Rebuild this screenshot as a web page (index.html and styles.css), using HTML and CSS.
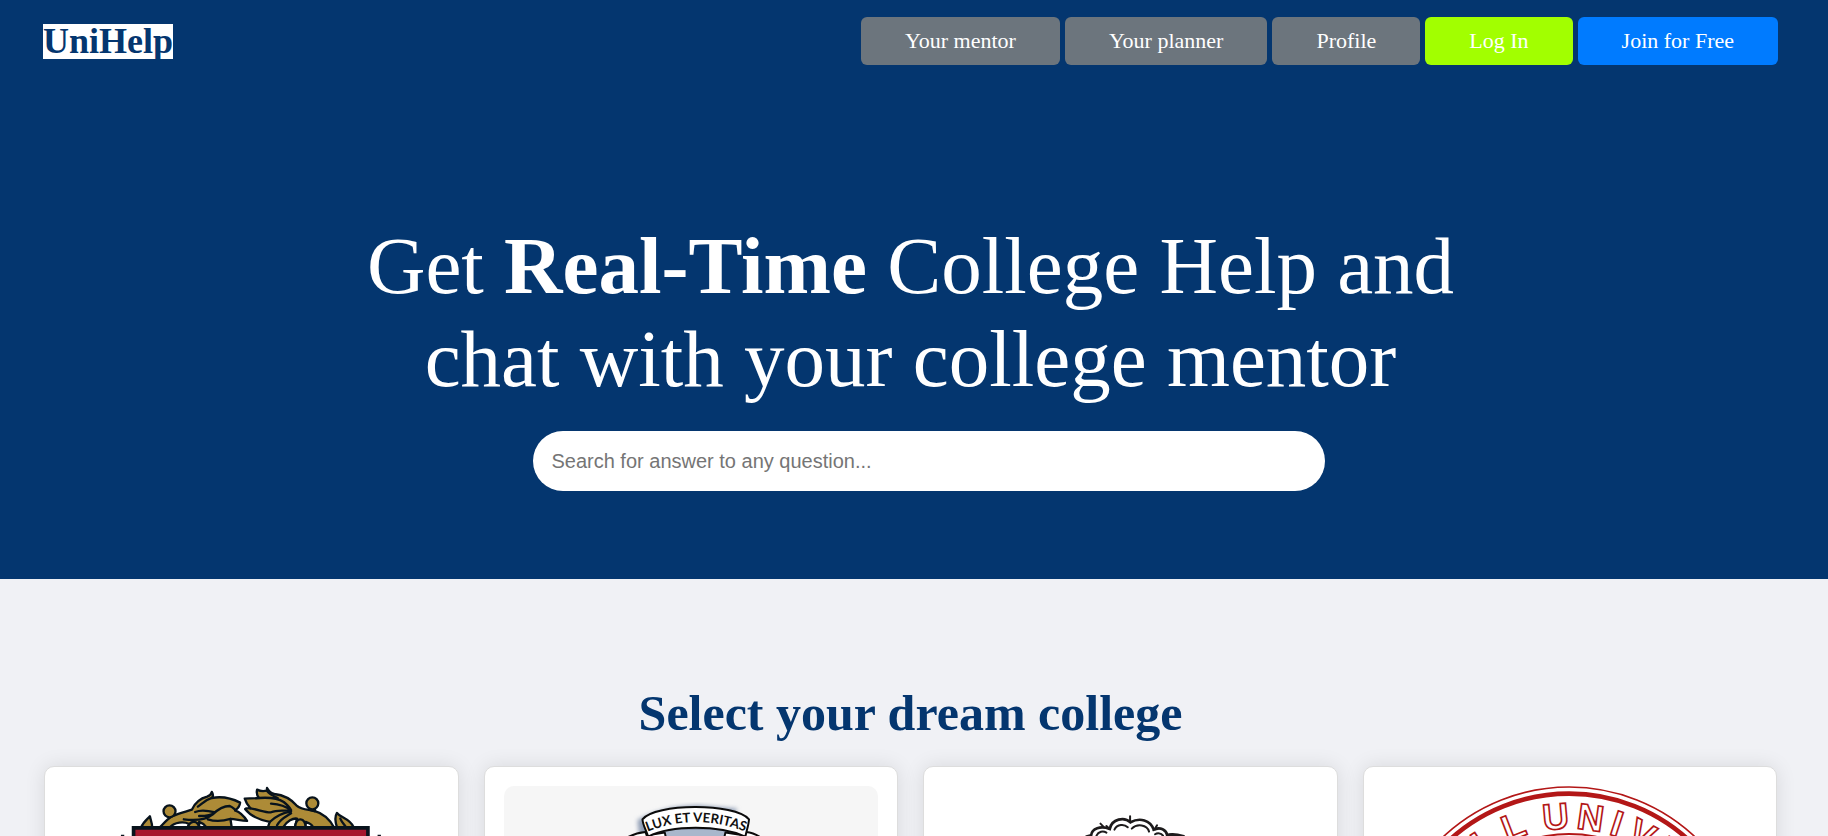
FILE: index.html
```
<!DOCTYPE html>
<html lang="en">
<head>
    <meta charset="UTF-8">
    <meta name="viewport" content="width=device-width, initial-scale=1.0">
    <title>UniHelp</title>
    <link rel="stylesheet" href="styles.css">
</head>
<body>
    <div class="hero">
        <header class="navbar">
            <a class="logo" href="#">UniHelp</a>
            <nav class="nav-buttons">
                <button type="button" class="btn">Your mentor</button>
                <button type="button" class="btn">Your planner</button>
                <button type="button" class="btn">Profile</button>
                <button type="button" class="btn btn-login">Log In</button>
                <button type="button" class="btn btn-join">Join for Free</button>
            </nav>
        </header>

        <h1>Get <b>Real-Time</b> College Help and<br>chat with your college mentor</h1>

        <form class="search">
            <input type="text" name="question" aria-label="Search" placeholder="Search for answer to any question...">
        </form>
    </div>

    <section class="colleges">
        <h2>Select your dream college</h2>
        <div class="cards">
            <!-- laurel and shield -->
            <a class="card" href="#" aria-label="Harvard">
                <svg viewBox="102 108 1125 1125">
                    <g fill="#ad8b37" stroke="#08131c" stroke-width="7" stroke-linejoin="round" stroke-linecap="round">
                        <path d="M334 232 C340 216 352 208 360 199 C362 210 367 220 367 232 Z"/>
                        <path d="M388 234 C400 222 412 208 426 199 C448 190 472 184 486 179 C496 158 512 145 532 140 C542 136 545 131 546 126 C551 134 550 140 546 144 C578 138 608 146 631 158 C630 168 624 176 616 181 C632 187 644 200 652 213 C632 212 616 207 602 207 L606 234 Z"/>
                        <path fill="none" d="M462 208 C496 212 528 210 548 194 C562 180 580 168 600 168 C612 174 618 180 616 181 M496 186 C514 178 536 182 556 187 C548 194 528 198 508 198 M546 144 C526 150 518 160 504 170 M602 207 C578 214 552 214 534 208"/>
                        <path fill="#fff" d="M420 232 C434 216 462 214 478 222 L474 232 Z"/>
                        <path d="M474 234 C478 212 504 208 508 234 Z"/>
                        <path fill="#fff" d="M508 232 L508 216 C520 220 526 226 530 232 Z"/>
                        <circle cx="419" cy="184" r="18"/>
                        <path d="M714 234 L720 216 C690 210 662 198 646 177 C650 173 656 174 662 175 C654 166 648 156 645 146 C660 146 674 145 688 144 C680 136 680 128 682 119 C692 124 702 124 711 122 L712 114 C718 124 724 130 734 132 C768 136 788 152 800 166 C816 180 832 178 852 182 C880 190 902 210 914 234 Z"/>
                        <path fill="none" d="M662 175 C690 180 708 188 724 187 C744 178 766 184 784 182 C766 166 744 162 724 161 M688 144 C716 142 744 144 762 156 C772 164 780 172 784 180 M711 122 C718 132 730 138 744 144 M784 184 C762 188 742 194 720 216 M742 226 C750 208 768 200 784 190"/>
                        <path fill="#fff" d="M760 232 C772 212 790 204 802 206 L796 232 Z"/>
                        <path d="M796 234 C796 198 830 202 828 234 Z"/>
                        <path fill="#fff" d="M828 216 C840 220 848 226 850 232 L828 232 Z"/>
                        <path d="M840 180 L840 172 L856 172 L856 184 Z"/>
                        <circle cx="848" cy="160" r="18"/>
                        <path d="M922 232 C916 214 915 200 922 189 C930 202 962 206 972 232 Z M932 206 C936 216 942 222 948 230"/>
                    </g>
                    <path d="M273 257 h10 M1044 257 h10" stroke="#08131c" stroke-width="5"/>
                    <path d="M311 234 H1015 V700 C1015 920 800 1060 663 1120 C526 1060 311 920 311 700 Z" fill="#a6172d" stroke="#08131c" stroke-width="11"/>
                </svg>
            </a>

            <!-- motto ribbon over a blue shield -->
            <a class="card" href="#" aria-label="Yale">
                <svg class="tinted" viewBox="99 108 1125 1125">
                    <defs>
                        <path id="motto" d="M527 246 Q674 187 826 246"/>
                        <filter id="soft"><feGaussianBlur stdDeviation="6"/></filter>
                    </defs>
                    <path d="M500 210 Q580 168 680 166 L800 176 L760 258 L505 258 Z" fill="#8d9bb3" filter="url(#soft)"/>
                    <path d="M560 240 H790 V800 C780 960 700 1020 670 1040 C640 1020 560 960 560 800 Z" fill="#a9b7cc"/>
                    <g fill="#fff" stroke="#0b0b0b" stroke-width="6" stroke-linejoin="round">
                        <path d="M474 260 Q498 248 524 246 L534 275 L474 275 Z"/>
                        <path d="M866 260 Q848 248 826 246 L818 275 L866 275 Z"/>
                        <path d="M582 248 L588 275 L540 275 L530 256 Z"/>
                        <path d="M764 248 L758 275 L810 275 L818 256 Z"/>
                        <path d="M515 208 C552 160 792 158 835 208 C834 226 828 240 824 260 C744 225 604 225 532 260 C526 240 516 226 515 208 Z"/>
                    </g>
                    <text class="motto-text"><textPath href="#motto" startOffset="50%" text-anchor="middle">LUX ET VERITAS</textPath></text>
                </svg>
            </a>

            <!-- scalloped crest -->
            <a class="card" href="#" aria-label="Columbia">
                <svg viewBox="99 108 1125 1125">
                    <g fill="none" stroke="#1d1b1c" stroke-width="6" stroke-linecap="round">
                        <path stroke-width="8" d="M530 260 L544 256 C546 236 572 226 600 237 C606 206 644 200 662 217 C690 202 722 210 732 239 C752 230 770 240 772 255 C792 250 806 254 822 259"/>
                        <path d="M614 239 C622 222 644 222 654 232 M666 236 C682 220 712 224 718 245 M560 257 C566 244 580 242 590 248 M736 253 C744 248 754 250 760 257"/>
                        <path d="M661 199 V217 M572 221 L581 230 M742 226 L734 239 L744 237"/>
                        <path d="M600 237 L590 228"/>
                        <path d="M535 262 C500 300 480 380 500 460 M815 262 C850 300 860 380 830 460"/>
                    </g>
                    <path d="M772 252 C790 248 800 252 808 260 H776 Z" fill="#1d1b1c"/>
                </svg>
            </a>

            <!-- round seal, letters set around the ring -->
            <a class="card" href="#" aria-label="Cornell University">
                <svg viewBox="99 108 1125 1125">
                    <g fill="none" stroke="#b31717">
                        <circle cx="658" cy="664" r="553" stroke-width="5"/>
                        <circle cx="658" cy="664" r="533" stroke-width="14"/>
                        <circle cx="658" cy="664" r="412" stroke-width="6"/>
                    </g>
                    <g class="seal-text">
                        <text x="658" y="236" transform="rotate(-33 658 664)">L</text>
                        <text x="658" y="236" transform="rotate(-21 658 664)">L</text>
                        <text x="658" y="236" transform="rotate(-5 658 664)">U</text>
                        <text x="658" y="236" transform="rotate(8 658 664)">N</text>
                        <text x="658" y="236" transform="rotate(18 658 664)">I</text>
                        <text x="658" y="236" transform="rotate(28 658 664)">V</text>
                        <text x="658" y="236" transform="rotate(40 658 664)">E</text>
                    </g>
                </svg>
            </a>
        </div>
    </section>
</body>
</html>
```
FILE: styles.css
```
* {
    box-sizing: border-box;
}

body {
    margin: 0;
    font-family: "Liberation Serif", "Times New Roman", serif;
    background-color: #f0f1f5;
}

.hero {
    background-color: #04366f;
    padding-bottom: 88px;
}

.navbar {
    display: flex;
    justify-content: space-between;
    align-items: center;
    padding: 17px 50px 17px 43px;
}

.logo {
    font-size: 36px;
    line-height: 35px;
    font-weight: bold;
    color: #04366f;
    background-color: #fff;
    text-decoration: none;
}

.nav-buttons {
    display: flex;
    gap: 5px;
}

.btn {
    height: 48px;
    padding: 0 44px;
    border: none;
    border-radius: 6px;
    font-family: inherit;
    font-size: 22px;
    color: #fff;
    background-color: #6c757d;
    cursor: pointer;
}

.btn-login {
    background-color: #a2ff00;
}

.btn-join {
    background-color: #007bff;
}

h1 {
    margin: 138px 7px 0 0;
    font-size: 81px;
    line-height: 93px;
    font-weight: normal;
    text-align: center;
    color: #fff;
}

.search {
    display: flex;
    justify-content: center;
    margin-top: 25px;
    padding-left: 30px;
}

.search input {
    width: 44%;
    height: 60px;
    padding: 0 18px;
    border: none;
    border-radius: 30px;
    font-family: "Liberation Sans", Arial, sans-serif;
    font-size: 20px;
    background-color: #fff;
}

.colleges {
    padding: 104px 51px 40px 44px;
}

h2 {
    margin: 0 0 23px;
    font-size: 50px;
    line-height: 60px;
    text-align: center;
    color: #04366f;
}

.cards {
    display: grid;
    grid-template-columns: repeat(4, 1fr);
    gap: 25px;
}

.card {
    padding: 19px;
    border: 1px solid #ddd;
    border-radius: 10px;
    background-color: #fff;
    box-shadow: 0 0 20px rgba(0, 0, 0, 0.1);
}

.card svg {
    display: block;
    width: 100%;
    border-radius: 10px;
}

.tinted {
    background-color: #f6f6f6;
}

.motto-text {
    font-family: Lato, sans-serif;
    font-size: 40px;
    font-weight: bold;
    fill: #111;
}

.seal-text {
    font-family: "Liberation Sans", Arial, sans-serif;
    font-size: 110px;
    font-weight: bold;
    text-anchor: middle;
    fill: #fff;
    stroke: #b31717;
    stroke-width: 5px;
}
```
